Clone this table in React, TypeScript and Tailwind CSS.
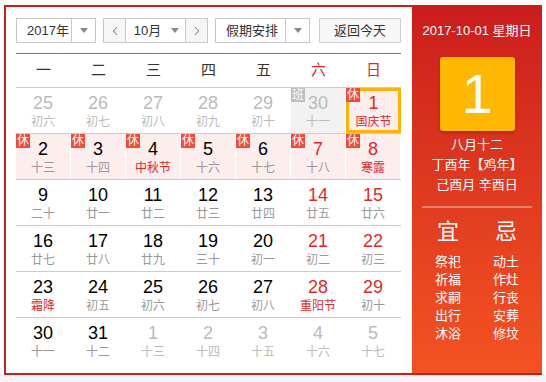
import { ChevronLeft, ChevronRight } from "lucide-react";

type Cell = {
  d: number;
  l: string;
  other?: boolean;
  wk?: boolean;
  fest?: boolean;
  badge?: "休" | "班";
  today?: boolean;
};

const weeks: Cell[][] = [
  [
    { d: 25, l: "初六", other: true },
    { d: 26, l: "初七", other: true },
    { d: 27, l: "初八", other: true },
    { d: 28, l: "初九", other: true },
    { d: 29, l: "初十", other: true },
    { d: 30, l: "十一", other: true, badge: "班" },
    { d: 1, l: "国庆节", wk: true, fest: true, badge: "休", today: true },
  ],
  [
    { d: 2, l: "十三", badge: "休" },
    { d: 3, l: "十四", badge: "休" },
    { d: 4, l: "中秋节", fest: true, badge: "休" },
    { d: 5, l: "十六", badge: "休" },
    { d: 6, l: "十七", badge: "休" },
    { d: 7, l: "十八", wk: true, badge: "休" },
    { d: 8, l: "寒露", wk: true, fest: true, badge: "休" },
  ],
  [
    { d: 9, l: "二十" },
    { d: 10, l: "廿一" },
    { d: 11, l: "廿二" },
    { d: 12, l: "廿三" },
    { d: 13, l: "廿四" },
    { d: 14, l: "廿五", wk: true },
    { d: 15, l: "廿六", wk: true },
  ],
  [
    { d: 16, l: "廿七" },
    { d: 17, l: "廿八" },
    { d: 18, l: "廿九" },
    { d: 19, l: "三十" },
    { d: 20, l: "初一" },
    { d: 21, l: "初二", wk: true },
    { d: 22, l: "初三", wk: true },
  ],
  [
    { d: 23, l: "霜降", fest: true },
    { d: 24, l: "初五" },
    { d: 25, l: "初六" },
    { d: 26, l: "初七" },
    { d: 27, l: "初八" },
    { d: 28, l: "重阳节", wk: true, fest: true },
    { d: 29, l: "初十", wk: true },
  ],
  [
    { d: 30, l: "十一" },
    { d: 31, l: "十二" },
    { d: 1, l: "十三", other: true },
    { d: 2, l: "十四", other: true },
    { d: 3, l: "十五", other: true },
    { d: 4, l: "十六", other: true },
    { d: 5, l: "十七", other: true },
  ],
];

const yi = ["祭祀", "祈福", "求嗣", "出行", "沐浴"];
const ji = ["动土", "作灶", "行丧", "安葬", "修坟"];

function Caret() {
  return (
    <span className="w-0 h-0 border-l-[4px] border-r-[4px] border-t-[5px] border-l-transparent border-r-transparent border-t-[#888]" />
  );
}

function DayCell({ c }: { c: Cell }) {
  const bg = c.badge === "休" ? "bg-[#fdeeee]" : c.badge === "班" ? "bg-[#f2f2f2]" : "";
  const numColor = c.other ? "text-[#bbbbbb]" : c.wk ? "text-[#e02a2a]" : "text-black";
  const lunarColor = c.other ? "text-[#bbbbbb]" : c.fest ? "text-[#e02a2a]" : "text-[#999999]";
  return (
    <div
      className={`relative flex flex-col items-center ${bg} ${
        c.today ? "border-[3px] border-[#ffb400] pt-[2px]" : "border-r border-white pt-[5px]"
      }`}
    >
      {c.badge && (
        <span
          className={`absolute ${c.today ? "-left-[3px] -top-[3px]" : "left-0 top-0"} w-[14px] h-[14px] flex items-center justify-center text-[12px] leading-none text-white ${
            c.badge === "休" ? "bg-[#f44a3a]" : "bg-[#bdbdbd]"
          }`}
        >
          {c.badge}
        </span>
      )}
      <span className={`text-[18px] leading-[20px] ${numColor}`}>{c.d}</span>
      <span className={`mt-[1px] text-[12px] leading-[16px] ${lunarColor}`}>{c.l}</span>
    </div>
  );
}

export default function App() {
  return (
    <div className="w-[546px] h-[382px] bg-white font-['Liberation_Sans','Noto_Sans_CJK_SC',sans-serif] overflow-hidden">
      <div className="ml-[4px] mt-[5px] w-[538px] h-[370px] flex border-y-2 border-l-2 border-[#cc1c1c]">
        {/* Calendar */}
        <div className="w-[406px] pl-[10px] pr-[11px] pt-[11px]">
          <div className="flex items-center h-[25px] text-[13px] text-[#333]">
            <div className="w-[80px] h-[25px] flex border border-[#c8c8c8] bg-white">
              <span className="flex-1 flex items-center pl-[10px]">2017年</span>
              <span className="w-[24px] flex items-center justify-center border-l border-[#c8c8c8]">
                <Caret />
              </span>
            </div>
            <div className="ml-[7px] w-[105px] h-[25px] flex border border-[#c8c8c8] bg-white">
              <span className="w-[22px] flex items-center justify-center bg-[#f6f6f6] border-r border-[#c8c8c8] text-[#555]">
                <ChevronLeft size={14} strokeWidth={1.5} />
              </span>
              <span className="flex-1 flex items-center justify-center gap-[10px] pl-[2px]">
                10月
                <Caret />
              </span>
              <span className="w-[22px] flex items-center justify-center bg-[#f6f6f6] border-l border-[#c8c8c8] text-[#555]">
                <ChevronRight size={14} strokeWidth={1.5} />
              </span>
            </div>
            <div className="ml-[7px] w-[95px] h-[25px] flex border border-[#c8c8c8] bg-white">
              <span className="flex-1 flex items-center pl-[10px]">假期安排</span>
              <span className="w-[24px] flex items-center justify-center border-l border-[#c8c8c8]">
                <Caret />
              </span>
            </div>
            <button className="ml-[9px] w-[82px] h-[25px] flex items-center justify-center border border-[#d0d0d0] bg-[#f7f7f7] text-[#333]">
              返回今天
            </button>
          </div>
          <div className="mt-[10px] border-t border-[#ec4b3c]" />
          <div className="grid grid-cols-7 h-[34px] border-b border-[#cccccc] text-[15px]">
            {["一", "二", "三", "四", "五", "六", "日"].map((w, i) => (
              <div
                key={w}
                className={`flex items-center justify-center ${i >= 5 ? "text-[#e02a2a]" : "text-[#333]"}`}
              >
                {w}
              </div>
            ))}
          </div>
          {weeks.map((row, ri) => (
            <div
              key={ri}
              className={`grid grid-cols-7 h-[46px] ${ri < 5 ? "border-b border-[#cccccc]" : ""}`}
            >
              {row.map((c, ci) => (
                <DayCell key={ci} c={c} />
              ))}
            </div>
          ))}
        </div>

        {/* Side panel */}
        <div className="w-[130px] bg-gradient-to-b from-[#cb1c1c] to-[#f45223] text-white flex flex-col items-center pt-[15px]">
          <div className="text-[13px] leading-[18px]">2017-10-01 星期日</div>
          <div className="mt-[17px] w-[75px] h-[74px] rounded-[3px] bg-[#ffb800] shadow-[0_2px_3px_rgba(120,0,0,0.35)] flex items-center justify-center text-[56px] leading-none">
            1
          </div>
          <div className="mt-[4px] text-[13px] leading-[20px] text-center">
            <div>八月十二</div>
            <div>丁酉年【鸡年】</div>
            <div>己酉月 辛酉日</div>
          </div>
          <div className="mt-[11px] w-[110px] h-[2px] bg-white/35" />
          <div className="mt-[11px] w-[116px] grid grid-cols-2">
            <div className="flex flex-col items-center">
              <div className="text-[22px] leading-[26px]">宜</div>
              <div className="mt-[8px] text-[13px] leading-[18px] flex flex-col items-center">
                {yi.map((t) => (
                  <span key={t}>{t}</span>
                ))}
              </div>
            </div>
            <div className="flex flex-col items-center">
              <div className="text-[22px] leading-[26px]">忌</div>
              <div className="mt-[8px] text-[13px] leading-[18px] flex flex-col items-center">
                {ji.map((t) => (
                  <span key={t}>{t}</span>
                ))}
              </div>
            </div>
          </div>
        </div>
      </div>
      <div className="h-[7px] bg-[#f5f5f5]" />
    </div>
  );
}
